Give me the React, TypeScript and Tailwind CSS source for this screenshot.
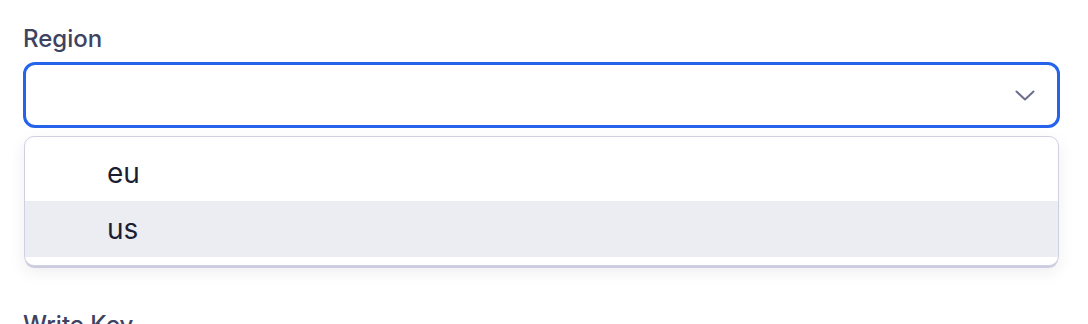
export default function App() {
  const options = ["eu", "us"];
  const active = "us";

  return (
    <div className="min-h-screen bg-white pl-[23px] pr-[28px] pt-[24px] font-['Inter',sans-serif]">
      <label className="block text-[24px] font-medium leading-[30px] text-[#3d4361]">Region</label>

      <div className="mt-[8px] flex h-[66px] items-center justify-end rounded-[12px] border-[3px] border-[#2563eb] bg-white pr-[22px]">
        <svg width="20" height="11" viewBox="0 0 20 11" fill="none">
          <path d="M1.5 1.5L10 9.5L18.5 1.5" stroke="#6b6f8c" strokeWidth="2" strokeLinecap="round" strokeLinejoin="round" />
        </svg>
      </div>

      <div className="mx-[1px] mt-[8px] rounded-[10px] border border-[#cfd0e1] bg-white py-[8px] shadow-[0_3px_0_-1px_#cbcce0,0_6px_16px_rgba(40,40,80,0.08)]">
        {options.map((o) => (
          <div
            key={o}
            className={`flex h-[56px] items-center pl-[82px] text-[28px] text-[#1b1e33] ${o === active ? "bg-[#ecedf2]" : ""}`}
          >
            {o}
          </div>
        ))}
      </div>

      <label className="mt-[44px] block text-[24px] font-medium leading-[30px] text-[#3d4361]">Write Key</label>
    </div>
  );
}
